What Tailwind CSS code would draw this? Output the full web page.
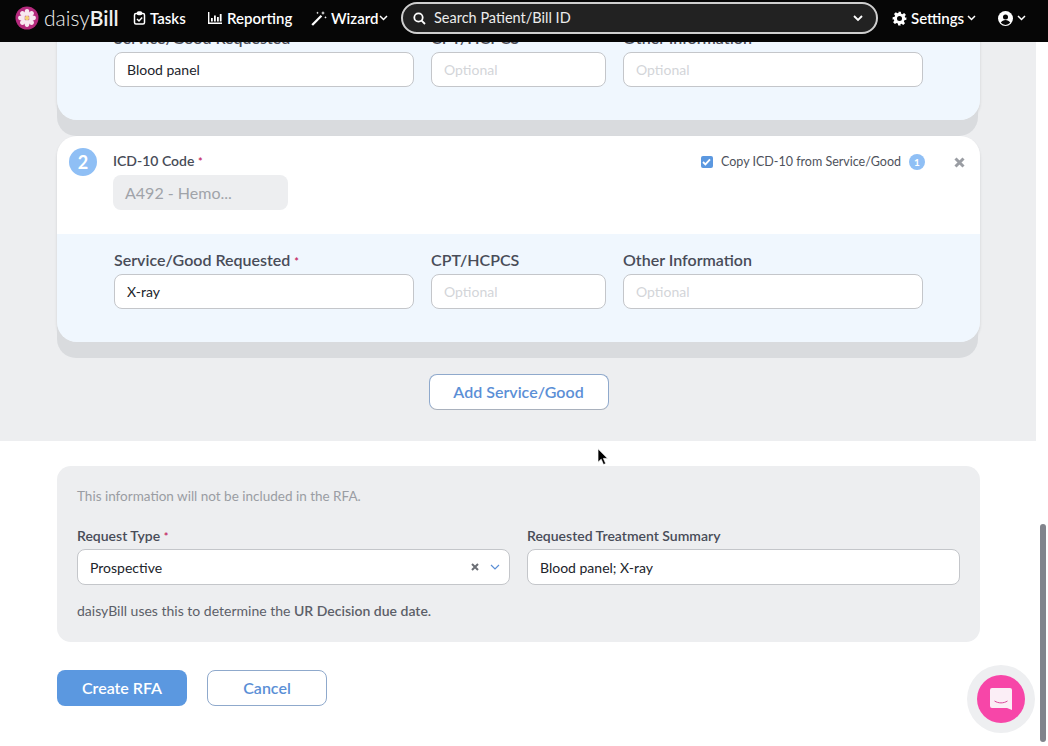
<!DOCTYPE html>
<html lang="en">
  <head>
    <meta charset="UTF-8" />
    <title>daisyBill - Create RFA</title>
    <script src="https://cdn.jsdelivr.net/npm/@tailwindcss/browser@4"></script>
  </head>
  <body class="bg-white text-[#21242b] font-['Lato',sans-serif]">
    <div class="relative w-[1048px] h-[746px] overflow-hidden bg-white">
      <!-- top nav -->
      <header class="relative z-10 h-[42px] pb-[6px] bg-[#060606] text-white flex items-center text-[15px] font-semibold whitespace-nowrap">
        <svg class="ml-[15px] w-6 h-6" viewBox="0 0 24 24">
          <circle cx="12" cy="12" r="11.5" fill="#b52a7d" />
          <g fill="#f8e8f0">
            <ellipse cx="12" cy="6.500" rx="2.400" ry="3.400" />
            <ellipse cx="12" cy="17.500" rx="2.400" ry="3.400" />
            <ellipse cx="6.500" cy="12" rx="3.400" ry="2.400" />
            <ellipse cx="17.500" cy="12" rx="3.400" ry="2.400" />
            <ellipse cx="8" cy="8" rx="2.400" ry="3.200" transform="rotate(-45 8 8)" />
            <ellipse cx="16" cy="8" rx="2.400" ry="3.200" transform="rotate(45 16 8)" />
            <ellipse cx="8" cy="16" rx="2.400" ry="3.200" transform="rotate(45 8 16)" />
            <ellipse cx="16" cy="16" rx="2.400" ry="3.200" transform="rotate(-45 16 16)" />
          </g>
          <circle cx="12" cy="12" r="2.200" fill="#f3d27a" />
        </svg>
        <span class="ml-[5px] w-[89px] text-[21px] font-light text-[#f0f0f0]">daisy<b class="font-semibold">Bill</b></span>
        <svg class="w-[13px] h-[14px]" viewBox="0 0 13 14" fill="none" stroke="white" stroke-width="1.500">
          <rect x="1.500" y="2.500" width="10" height="10.500" rx="1.500" />
          <rect x="4.500" y="1" width="4" height="2.500" rx="1" fill="white" />
          <path d="M4 8l2 2 3.200-3.600" />
        </svg>
        <span class="ml-[4px] w-[36px]">Tasks</span>
        <svg class="ml-[22px] w-[14px] h-[12px]" viewBox="0 0 14 12" fill="white">
          <path d="M0 0h1.400v10.600H14V12H0z" />
          <path d="M3 6h1.800v3.600H3zM6 3.500h1.800v6.100H6zM9 5h1.800v4.600H9zM11.800 2h1.800v7.600h-1.800z" />
        </svg>
        <span class="ml-[5px] w-[61px]">Reporting</span>
        <svg class="ml-[23px] w-[16px] h-[15px]" viewBox="0 0 16 15" fill="white">
          <path d="M0.400 13.200L9.600 4l1.600 1.600L2 14.800z" />
          <path d="M12 0l.6 1.600L14 2l-1.400.5L12 4l-.6-1.500L10 2l1.400-.4zM14.500 5l.4 1 1 .4-1 .4-.4 1-.4-1-1-.4 1-.4zM6.500 0.500l.4 1 1 .4-1 .4-.4 1-.4-1-1-.4 1-.4z" />
        </svg>
        <span class="ml-[4px] w-[44px]">Wizard</span>
        <svg class="ml-[4px] w-[9px] h-[6px]" viewBox="0 0 9 6" fill="none" stroke="white" stroke-width="1.500"><path d="M1 1l3.500 3.500L8 1" /></svg>
        <div class="ml-[13px] w-[477px] h-[32px] rounded-full border-2 border-[#cfcfcf] bg-[#222222] flex items-center font-normal text-[14.5px]">
          <svg class="ml-[10px] w-[13px] h-[13px]" viewBox="0 0 13 13" fill="none" stroke="white" stroke-width="1.800">
            <circle cx="5.500" cy="5.500" r="4.200" /><path d="M8.600 8.600L12 12" />
          </svg>
          <span class="ml-[8px] text-[#ececec]">Search Patient/Bill ID</span>
          <svg class="ml-auto mr-[13px] w-[10px] h-[7px]" viewBox="0 0 10 7" fill="none" stroke="white" stroke-width="1.800"><path d="M1 1l4 4 4-4" /></svg>
        </div>
        <svg class="ml-[14px] w-[15px] h-[15px]" viewBox="0 0 24 24" fill="white">
          <path fill-rule="evenodd" d="M10 1h4l.7 3.200 1.900.8 2.800-1.800 2.800 2.800-1.800 2.800.8 1.900L23 10v4l-3.200.7-.8 1.900 1.800 2.800-2.800 2.800-2.800-1.800-1.900.8L14 23h-4l-.7-3.200-1.900-.8-2.800 1.800-2.800-2.800 1.800-2.800-.8-1.900L1 14v-4l3.200-.7.8-1.900-1.800-2.800 2.800-2.800 2.800 1.800 1.900-.8zM12 8a4 4 0 100 8 4 4 0 000-8z" />
        </svg>
        <span class="ml-[4px] w-[52px]">Settings</span>
        <svg class="ml-[4px] w-[9px] h-[6px]" viewBox="0 0 9 6" fill="none" stroke="white" stroke-width="1.500"><path d="M1 1l3.500 3.500L8 1" /></svg>
        <svg class="ml-[22px] w-[15px] h-[15px]" viewBox="0 0 16 16">
          <circle cx="8" cy="8" r="8" fill="white" />
          <circle cx="8" cy="6.300" r="2.700" fill="#060606" />
          <path d="M3 12.600c1-2 3-2.900 5-2.900s4 .9 5 2.900a6.600 6.600 0 01-10 0z" fill="#060606" />
        </svg>
        <svg class="ml-[4px] w-[9px] h-[6px]" viewBox="0 0 9 6" fill="none" stroke="white" stroke-width="1.500"><path d="M1 1l3.500 3.500L8 1" /></svg>
      </header>

      <!-- scrolled service list -->
      <section class="w-[1036px] h-[399px] overflow-hidden bg-[#edeef0] px-[57px]">
        <div class="w-[923px] -mt-[30px] rounded-b-[20px] shadow-[-1px_17px_0_-1px_#d9dbde,0_2px_3px_rgba(0,0,0,0.12)]">
          <div class="h-[108px] rounded-b-[20px] bg-[#f0f7fe] pl-[57px] pt-[16px]">
            <div class="flex gap-[17px]">
              <div class="w-[300px]">
                <div class="h-[24px] leading-[20px] text-[16px] font-semibold text-[#484c58] whitespace-nowrap">Service/Good Requested</div>
                <div class="h-[35px] rounded-lg border border-[#c4c6ca] bg-white flex items-center pl-[12px] text-[14px]">Blood panel</div>
              </div>
              <div class="w-[175px]">
                <div class="h-[24px] leading-[20px] text-[16px] font-semibold text-[#484c58]">CPT/HCPCS</div>
                <div class="h-[35px] rounded-lg border border-[#c4c6ca] bg-white flex items-center pl-[12px] text-[14px] text-[#d3d5d9]">Optional</div>
              </div>
              <div class="w-[300px]">
                <div class="h-[24px] leading-[20px] text-[16px] font-semibold text-[#484c58]">Other Information</div>
                <div class="h-[35px] rounded-lg border border-[#c4c6ca] bg-white flex items-center pl-[12px] text-[14px] text-[#d3d5d9]">Optional</div>
              </div>
            </div>
          </div>
        </div>

        <div class="w-[923px] mt-[16px] rounded-[20px] shadow-[-1px_17px_0_-1px_#d9dbde,0_2px_3px_rgba(0,0,0,0.12)]">
          <div class="h-[98px] rounded-t-[20px] bg-white flex">
            <div class="ml-[12px] mt-[12px] w-[28px] h-[28px] rounded-full bg-[#8fbff5] text-white flex items-center justify-center text-[18px] font-bold">2</div>
            <div class="ml-[16px] mt-[16px]">
              <div class="text-[14px] leading-[18px] font-semibold text-[#484c58]">ICD-10 Code <span class="text-[#c2185b] text-[11px]">*</span></div>
              <div class="mt-[4px] w-[175px] h-[35px] rounded-lg bg-[#edeef0] flex items-center pl-[12px] text-[16px] text-[#a0a3a9]">A492 - Hemo...</div>
            </div>
            <div class="ml-auto mt-[18px] mr-[15px] flex items-center h-[16px]">
              <div class="w-[12px] h-[12px] rounded-[2px] bg-[#5b98e0] flex items-center justify-center">
                <svg class="w-[9px] h-[8px]" viewBox="0 0 9 8" fill="none" stroke="white" stroke-width="1.800"><path d="M1 4l2.400 2.400L8 1.400" /></svg>
              </div>
              <span class="ml-[8px] text-[12.5px] text-[#4e525c]">Copy ICD-10 from Service/Good</span>
              <div class="ml-[8px] w-[16px] h-[16px] rounded-full bg-[#8fbff5] text-white text-[10px] font-bold flex items-center justify-center">1</div>
              <svg class="ml-[29px] w-[11px] h-[11px]" viewBox="0 0 11 11" stroke="#9a9da3" stroke-width="3"><path d="M1.500 1.500l8 8M9.500 1.500l-8 8" /></svg>
            </div>
          </div>
          <div class="h-[108px] rounded-b-[20px] bg-[#f0f7fe] pl-[57px] pt-[16px]">
            <div class="flex gap-[17px]">
              <div class="w-[300px]">
                <div class="h-[24px] leading-[20px] text-[16px] font-semibold text-[#484c58] whitespace-nowrap">Service/Good Requested <span class="text-[#c2185b] text-[11px]">*</span></div>
                <div class="h-[35px] rounded-lg border border-[#c4c6ca] bg-white flex items-center pl-[12px] text-[14px]">X-ray</div>
              </div>
              <div class="w-[175px]">
                <div class="h-[24px] leading-[20px] text-[16px] font-semibold text-[#484c58]">CPT/HCPCS</div>
                <div class="h-[35px] rounded-lg border border-[#c4c6ca] bg-white flex items-center pl-[12px] text-[14px] text-[#d3d5d9]">Optional</div>
              </div>
              <div class="w-[300px]">
                <div class="h-[24px] leading-[20px] text-[16px] font-semibold text-[#484c58]">Other Information</div>
                <div class="h-[35px] rounded-lg border border-[#c4c6ca] bg-white flex items-center pl-[12px] text-[14px] text-[#d3d5d9]">Optional</div>
              </div>
            </div>
          </div>
        </div>

        <div class="mt-[32px] flex justify-center w-[923px]">
          <button class="w-[180px] h-[36px] rounded-lg border border-[#8fa9cc] border-b-[#a9b1bd] bg-white text-[16px] font-semibold text-[#5b8fd6]">Add Service/Good</button>
        </div>
      </section>

      <!-- RFA details -->
      <section class="px-[57px] pt-[25px]">
        <div class="w-[923px] h-[176px] rounded-[14px] bg-[#edeef0] px-[20px] pt-[21px]">
          <p class="text-[13.5px] leading-[18px] text-[#9a9da3]">This information will not be included in the RFA.</p>
          <div class="mt-[22px] flex gap-[17px]">
            <div class="w-[433px]">
              <div class="h-[22px] leading-[18px] text-[14px] font-semibold text-[#484c58]">Request Type <span class="text-[#c2185b] text-[11px]">*</span></div>
              <div class="h-[36px] rounded-lg border border-[#c4c6ca] bg-white flex items-center pl-[12px] text-[14px]">
                Prospective
                <svg class="ml-auto w-[8px] h-[8px]" viewBox="0 0 8 8" stroke="#6b6e75" stroke-width="2"><path d="M1 1l6 6M7 1L1 7" /></svg>
                <svg class="ml-[11px] mr-[9px] w-[10px] h-[6px]" viewBox="0 0 10 6" fill="none" stroke="#5b8fd6" stroke-width="1.200"><path d="M1 1l4 4 4-4" /></svg>
              </div>
            </div>
            <div class="w-[433px]">
              <div class="h-[22px] leading-[18px] text-[14px] font-semibold text-[#484c58]">Requested Treatment Summary</div>
              <div class="h-[36px] rounded-lg border border-[#c4c6ca] bg-white flex items-center pl-[12px] text-[14px]">Blood panel; X-ray</div>
            </div>
          </div>
          <p class="mt-[17px] text-[14px] leading-[18px] text-[#5c5f68]">daisyBill uses this to determine the <b class="font-semibold">UR Decision due date.</b></p>
        </div>
        <div class="mt-[28px] flex gap-5">
          <button class="w-[130px] h-[36px] rounded-lg bg-[#5b98e0] text-white text-[16px] font-semibold">Create RFA</button>
          <button class="w-[120px] h-[36px] rounded-lg border border-[#8fa9cc] bg-white text-[16px] font-semibold text-[#5b8fd6]">Cancel</button>
        </div>
      </section>

      <!-- overlays: cursor, chat launcher, scrollbar -->
      <svg class="absolute left-[597px] top-[448px] w-[12px] h-[18px]" viewBox="0 0 12 18">
        <path d="M1 0.800v13.400l3.200-3 2.300 5.400 2.200-1-2.300-5.200h4.200z" fill="black" stroke="white" stroke-width="0.700" />
      </svg>
      <div class="absolute left-[967px] top-[665px] w-[68px] h-[68px] rounded-full bg-[#eeeff1] flex items-center justify-center">
        <div class="w-[48px] h-[48px] rounded-full bg-[#f746a8] flex items-center justify-center">
          <svg class="w-[24px] h-[24px]" viewBox="0 0 24 24">
            <path d="M3 1h18a2 2 0 012 2v20l-5-2H3a2 2 0 01-2-2V3a2 2 0 012-2z" fill="#fbeef6" />
            <path d="M5.500 14c4 2.500 9 2.500 13 0" fill="none" stroke="#d94a9c" stroke-width="1" />
          </svg>
        </div>
      </div>
      <div class="absolute left-[1040px] top-[524px] w-[6px] h-[218px] rounded-full bg-[#81848c]"></div>
    </div>
  </body>
</html>
